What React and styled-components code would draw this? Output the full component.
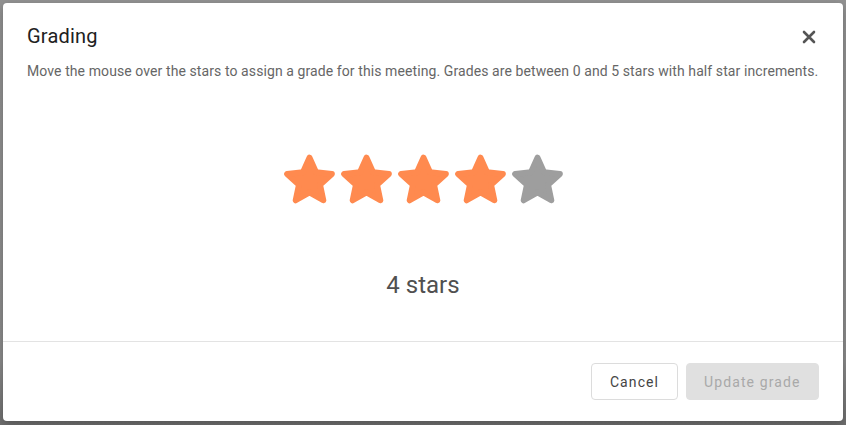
import React from "react";
import styled, { createGlobalStyle } from "styled-components";

const GlobalStyle = createGlobalStyle`
  html, body {
    margin: 0;
    padding: 0;
    background: #8f8f8f;
    font-family: Roboto, "Noto Sans", sans-serif;
  }
`;

const Overlay = styled.div`
  width: 846px;
  height: 425px;
  padding: 3px;
  box-sizing: border-box;
  background: linear-gradient(#929292, #8a8a8a 85%, #6e6e6e);
`;

const Modal = styled.div`
  width: 840px;
  height: 418px;
  background: #fff;
  border-radius: 4px;
  box-shadow: 0 3px 8px rgba(0, 0, 0, 0.25);
  display: flex;
  flex-direction: column;
`;

const Header = styled.div`
  display: flex;
  align-items: center;
  justify-content: space-between;
  padding: 21px 24px 0 24px;
`;

const Title = styled.h2`
  margin: 0;
  font-size: 20px;
  line-height: 24px;
  font-weight: 400;
  letter-spacing: 0.2px;
  color: #212121;
`;

const Close = styled.button`
  border: none;
  background: none;
  padding: 0;
  width: 20px;
  height: 20px;
  display: flex;
  align-items: center;
  justify-content: center;
  cursor: pointer;
  margin-top: 2px;
`;

const Description = styled.p`
  margin: 13px 12px 0 24px;
  font-size: 14px;
  line-height: 20px;
  letter-spacing: 0.09px;
  white-space: nowrap;
  color: #666;
`;

const Body = styled.div`
  flex: 1;
  display: flex;
  flex-direction: column;
  align-items: center;
  padding-top: 73px;
`;

const Stars = styled.div`
  display: flex;
`;

const StarSvg = styled.svg`
  width: 57px;
  height: 50px;
  display: block;
  cursor: pointer;
`;

const Label = styled.div`
  margin-top: 66px;
  font-size: 24px;
  line-height: 30px;
  color: #505050;
  font-weight: 400;
`;

const Footer = styled.div`
  border-top: 1px solid #e3e3e3;
  display: flex;
  justify-content: flex-end;
  gap: 8px;
  padding: 21px 24px 21px 24px;
`;

const Button = styled.button`
  height: 37px;
  padding: 0 17.5px;
  border-radius: 4px;
  font-family: Roboto, "Noto Sans", sans-serif;
  font-size: 14px;
  letter-spacing: 1.1px;
  border: 1px solid ${(p) => (p.$primary ? "#e0e0e0" : "#dcdcdc")};
  background: ${(p) => (p.$primary ? "#e0e0e0" : "#fff")};
  color: ${(p) => (p.$primary ? "#a9a9a9" : "#444")};
  cursor: ${(p) => (p.$primary ? "default" : "pointer")};
`;

const starPoints = (() => {
  const R = 23.5;
  const r = R * 0.47;
  const cx = 28.5;
  const cy = 25 + 0.0955 * R;
  const pts = [];
  for (let i = 0; i < 10; i++) {
    const rad = i % 2 === 0 ? R : r;
    const a = -Math.PI / 2 + (i * Math.PI) / 5;
    pts.push(`${(cx + rad * Math.cos(a)).toFixed(2)},${(cy + rad * Math.sin(a)).toFixed(2)}`);
  }
  return pts.join(" ");
})();

const Star = ({ filled }) => {
  const color = filled ? "#ff8a4f" : "#9e9e9e";
  return (
    <StarSvg viewBox="0 0 57 50">
      <polygon
        points={starPoints}
        fill={color}
        stroke={color}
        strokeWidth="6"
        strokeLinejoin="round"
      />
    </StarSvg>
  );
};

export default function App() {
  const grade = 4;
  return (
    <>
      <GlobalStyle />
      <Overlay>
        <Modal>
          <Header>
            <Title>Grading</Title>
            <Close aria-label="close">
              <svg width="14" height="14" viewBox="0 0 14 14">
                <path
                  d="M2 2 L12 12 M12 2 L2 12"
                  stroke="#555"
                  strokeWidth="2.6"
                  strokeLinecap="round"
                />
              </svg>
            </Close>
          </Header>
          <Description>
            Move the mouse over the stars to assign a grade for this meeting.
            Grades are between 0 and 5 stars with half star increments.
          </Description>
          <Body>
            <Stars>
              {[1, 2, 3, 4, 5].map((n) => (
                <Star key={n} filled={n <= grade} />
              ))}
            </Stars>
            <Label>{grade} stars</Label>
          </Body>
          <Footer>
            <Button>Cancel</Button>
            <Button $primary disabled>
              Update grade
            </Button>
          </Footer>
        </Modal>
      </Overlay>
    </>
  );
}
